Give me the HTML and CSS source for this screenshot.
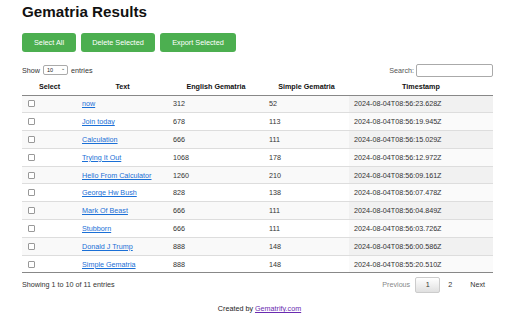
FILE: index.html
```html
<!DOCTYPE html>
<html>
<head>
<meta charset="utf-8">
<link rel="stylesheet" href="styles.css">
</head>
<body>
<div class="page">
  <h1 class="title">Gematria Results</h1>
  <div class="actions">
    <button class="btn btn-a">Select All</button>
    <button class="btn btn-b">Delete Selected</button>
    <button class="btn btn-c">Export Selected</button>
  </div>
  <div class="controls">
    <label class="length">Show <span class="select">10 <span class="caret">&#8964;</span></span> entries</label>
    <label class="search">Search: <span class="search-input"></span></label>
  </div>
  <table class="results">
    <thead>
      <tr>
        <th class="c-sel">Select</th>
        <th class="c-text">Text</th>
        <th class="c-eng">English Gematria</th>
        <th class="c-simple">Simple Gematria</th>
        <th class="c-time">Timestamp</th>
      </tr>
    </thead>
    <tbody>
      <tr><td><span class="cb"></span></td><td><a href="#">now</a></td><td>312</td><td>52</td><td class="sorted">2024-08-04T08:56:23.628Z</td></tr>
      <tr><td><span class="cb"></span></td><td><a href="#">Join today</a></td><td>678</td><td>113</td><td class="sorted">2024-08-04T08:56:19.945Z</td></tr>
      <tr><td><span class="cb"></span></td><td><a href="#">Calculation</a></td><td>666</td><td>111</td><td class="sorted">2024-08-04T08:56:15.029Z</td></tr>
      <tr><td><span class="cb"></span></td><td><a href="#">Trying It Out</a></td><td>1068</td><td>178</td><td class="sorted">2024-08-04T08:56:12.972Z</td></tr>
      <tr><td><span class="cb"></span></td><td><a href="#">Hello From Calculator</a></td><td>1260</td><td>210</td><td class="sorted">2024-08-04T08:56:09.161Z</td></tr>
      <tr><td><span class="cb"></span></td><td><a href="#">George Hw Bush</a></td><td>828</td><td>138</td><td class="sorted">2024-08-04T08:56:07.478Z</td></tr>
      <tr><td><span class="cb"></span></td><td><a href="#">Mark Of Beast</a></td><td>666</td><td>111</td><td class="sorted">2024-08-04T08:56:04.849Z</td></tr>
      <tr><td><span class="cb"></span></td><td><a href="#">Stubborn</a></td><td>666</td><td>111</td><td class="sorted">2024-08-04T08:56:03.726Z</td></tr>
      <tr><td><span class="cb"></span></td><td><a href="#">Donald J Trump</a></td><td>888</td><td>148</td><td class="sorted">2024-08-04T08:56:00.586Z</td></tr>
      <tr><td><span class="cb"></span></td><td><a href="#">Simple Gematria</a></td><td>888</td><td>148</td><td class="sorted">2024-08-04T08:55:20.510Z</td></tr>
    </tbody>
  </table>
  <div class="bottom">
    <div class="info">Showing 1 to 10 of 11 entries</div>
    <div class="paging">
      <span class="pg disabled">Previous</span>
      <span class="pg current">1</span>
      <span class="pg">2</span>
      <span class="pg next">Next</span>
    </div>
  </div>
  <footer class="credit">Created by <a class="visited" href="#">Gematrify.com</a></footer>
</div>
</body>
</html>
```
FILE: styles.css
```css
* { box-sizing: border-box; }
html, body { margin: 0; padding: 0; background: #fff; }
body {
  font-family: "Liberation Sans", Arial, sans-serif;
  color: #222;
  font-size: 7.2px;
}
.page {
  width: 512px;
  padding: 0 19px 0 22px;
}
.title {
  margin: 0;
  padding-top: 3px;
  font-size: 15.2px;
  line-height: 18px;
  font-weight: bold;
  color: #111;
}
.actions {
  display: flex;
  gap: 5px;
  margin-top: 12px;
}
.btn {
  height: 19px;
  border: none;
  border-radius: 3px;
  background: #4caf50;
  color: #fff;
  font-family: "Liberation Sans", Arial, sans-serif;
  font-size: 7.3px;
  padding: 0;
}
.btn-a { width: 54px; }
.btn-b { width: 74px; }
.btn-c { width: 76px; }
.controls {
  display: flex;
  justify-content: space-between;
  align-items: center;
  margin-top: 11px;
  height: 14px;
  color: #333;
}
.length { display: flex; align-items: center; gap: 3px; }
.select {
  display: inline-flex;
  align-items: center;
  justify-content: space-between;
  width: 25px;
  height: 10px;
  border: 1px solid #aaa;
  border-radius: 2px;
  font-size: 5.5px;
  padding: 0 2px 0 3px;
  color: #222;
}
.caret { font-size: 5px; line-height: 5px; margin-top: -3px; }
.search { display: flex; align-items: center; gap: 2px; color: #555; }
.search-input {
  display: inline-block;
  width: 77px;
  height: 13px;
  border: 1px solid #aaa;
  border-radius: 2px;
}
.results {
  width: 471px;
  border-collapse: collapse;
  margin-top: 2px;
  table-layout: fixed;
}
.results th {
  font-weight: bold;
  text-align: center;
  height: 16px;
  padding: 0 5px;
  color: #111;
  border-bottom: 1.5px solid #888;
}
.c-sel { width: 55px; }
.c-text { width: 91px; }
.c-eng { width: 96px; }
.c-simple { width: 85px; }
.c-time { width: 144px; }
.results td {
  height: 17.8px;
  padding: 0 5px;
  text-align: left;
  border-top: 1px solid #ddd;
  color: #333;
}
.results tbody tr:first-child td { border-top: none; }
.results tbody tr:nth-child(odd) td { background: #f9f9f9; }
.results tbody tr:nth-child(odd) td.sorted { background: #f1f1f1; }
.results tbody tr:nth-child(even) td.sorted { background: #fafafa; }
.results tbody tr:last-child td { border-bottom: 1.5px solid #888; }
.results a { color: #1a6fd6; text-decoration: underline; }
.cb {
  display: block;
  width: 7px;
  height: 7px;
  margin-left: 1px;
  border: 1px solid #999;
  border-radius: 1px;
  background: #fff;
}
.bottom {
  display: flex;
  justify-content: space-between;
  align-items: center;
  margin-top: 3px;
  height: 17px;
  color: #333;
}
.paging { display: flex; align-items: center; }
.pg {
  display: inline-flex;
  align-items: center;
  justify-content: center;
  height: 16px;
  padding: 0 6px;
  color: #333;
  border: 1px solid transparent;
}
.pg.disabled { color: #888; padding-right: 4px; }
.pg.current {
  width: 25px;
  border: 1px solid #ccc;
  border-radius: 2px;
  background: linear-gradient(#fff, #e0e0e0);
  margin-right: 1px;
}
.pg.next { margin-left: 4px; padding-right: 7px; }
.credit {
  text-align: center;
  margin-top: 11px;
  color: #222;
  padding-left: 4px;
}
.credit a { color: #6a2bb0; text-decoration: underline; }
```
